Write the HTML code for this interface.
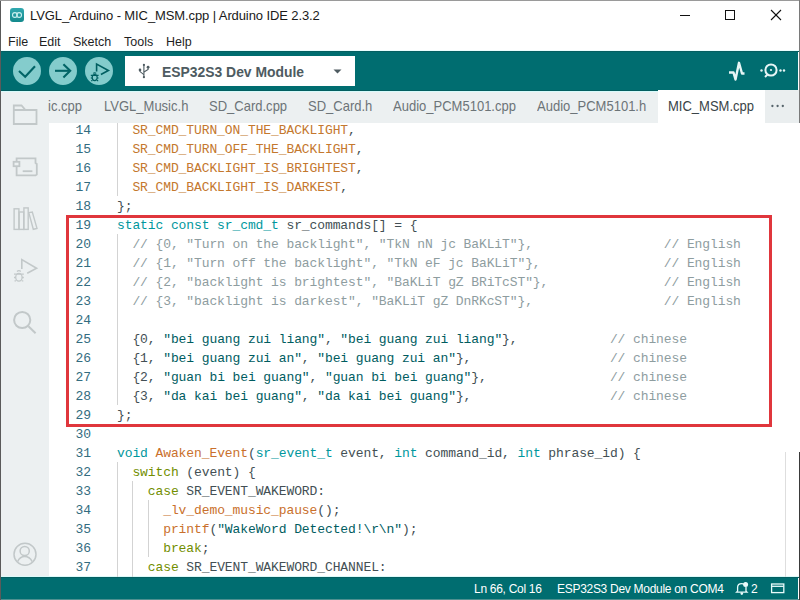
<!DOCTYPE html>
<html><head><meta charset="utf-8">
<style>
*{margin:0;padding:0;box-sizing:border-box}
html,body{width:800px;height:600px;overflow:hidden;background:#fff;font-family:"Liberation Sans",sans-serif}
.abs{position:absolute}
#frameL{left:0;top:0;width:1px;height:600px;background:#5a5a5a}
#frameT{left:0;top:0;width:800px;height:1px;background:#9a9a9a}
#frameR{left:799px;top:0;width:1px;height:123px;background:#7a7a7a}
#frameR2{left:799px;top:452px;width:1px;height:148px;background:#3a3a3a}
#frameB{left:1px;top:599px;width:798px;height:1px;background:#4f9090}
#title{left:1px;top:1px;width:797px;height:30px;background:#fff}
#menu{left:1px;top:30px;width:797px;height:21px;background:#fff}
#toolbar{left:1px;top:51px;width:797px;height:39px;background:#006d70}
#tabs{left:1px;top:90px;width:797px;height:33px;background:#ecf0f1}
#side{left:1px;top:90px;width:48px;height:487px;background:#ecf0f1}
#editor{left:49px;top:123px;width:751px;height:454px;background:#fff;overflow:hidden}
#status{left:1px;top:577px;width:797px;height:23px;background:#006d70}
.tt{font-size:13px;letter-spacing:-0.1px;color:#1a1a1a;white-space:nowrap}
.mn{font-size:12.5px;color:#1f1f1f;white-space:nowrap}
.tab{font-size:14.3px;color:#6c7478;white-space:nowrap;top:98px;transform:scaleX(0.91);transform-origin:0 0}
.code{font-family:"Liberation Mono",monospace;font-size:13px;letter-spacing:-0.1px;white-space:pre;line-height:19px;color:#434f54}
.ln{font-family:"Liberation Mono",monospace;font-size:13px;letter-spacing:-0.1px;line-height:19px;color:#336c80;text-align:right;width:60px;left:31px}
.k{color:#00979d}.f{color:#c9702c}.c{color:#8e9d9f}.s{color:#005c5f}.g{color:#728e00}.o{color:#c4782e}
.guide{width:1px;background:#d3d3d3}
.st{font-size:12px;color:#fff;white-space:nowrap;top:582px}
</style></head><body>
<div class="abs" id="title"></div>
<div class="abs" id="menu"></div>
<div class="abs" id="toolbar"></div>
<div class="abs" id="tabs"></div>
<div class="abs" id="side"></div>
<div class="abs" id="editor"></div>
<div class="abs" id="status"></div>

<!-- ringing edges -->
<div class="abs" style="left:1px;top:50px;width:798px;height:1px;background:#eafefe"></div>
<div class="abs" style="left:1px;top:51px;width:798px;height:1px;background:#045f61"></div>
<div class="abs" style="left:1px;top:90px;width:798px;height:1px;background:#045f61"></div>
<div class="abs" style="left:1px;top:91px;width:798px;height:1px;background:#d8fbfb"></div>
<div class="abs" style="left:1px;top:576px;width:798px;height:1px;background:#dcfafa"></div>
<div class="abs" style="left:1px;top:577px;width:798px;height:1px;background:#045f61"></div>
<!-- title bar -->
<svg class="abs" style="left:10px;top:8px" width="14" height="14" viewBox="0 0 14 14">
<defs><linearGradient id="ig" x1="0" y1="0" x2="0" y2="1"><stop offset="0" stop-color="#31a9b0"/><stop offset="1" stop-color="#13898c"/></linearGradient></defs><rect x="0" y="0" width="14" height="14" rx="3" fill="url(#ig)"/>
<g fill="none" stroke="#c8f0f0" stroke-width="1.1"><circle cx="4.9" cy="7" r="2.4"/><circle cx="9.1" cy="7" r="2.4"/></g>
</svg>
<div class="abs tt" style="left:30px;top:8px">LVGL_Arduino - MIC_MSM.cpp | Arduino IDE 2.3.2</div>
<svg class="abs" style="left:670px;top:0" width="128" height="30" viewBox="670 0 128 30">
<g stroke="#111" stroke-width="1" fill="none" shape-rendering="crispEdges">
<line x1="680" y1="15.5" x2="690" y2="15.5"/>
<rect x="725.5" y="10.5" width="9" height="9"/>
</g>
<g stroke="#111" stroke-width="1.1" fill="none">
<line x1="771" y1="10" x2="781" y2="20"/><line x1="781" y1="10" x2="771" y2="20"/>
</g>
</svg>

<!-- menu -->
<div class="abs mn" style="left:8px;top:35px">File</div>
<div class="abs mn" style="left:39px;top:35px">Edit</div>
<div class="abs mn" style="left:73px;top:35px">Sketch</div>
<div class="abs mn" style="left:124px;top:35px">Tools</div>
<div class="abs mn" style="left:166px;top:35px">Help</div>

<!-- toolbar -->
<svg class="abs" style="left:0;top:51px" width="120" height="39" viewBox="0 51 120 39">
<circle cx="27" cy="71" r="14" fill="#84cccc"/>
<circle cx="63" cy="71" r="14" fill="#84cccc"/>
<circle cx="99" cy="71" r="14" fill="#84cccc"/>
<g fill="none" stroke="#026466" stroke-width="2.1" stroke-linecap="butt" stroke-linejoin="miter">
<polyline points="19,71 25.2,76.8 35,66.2"/>
<line x1="55" y1="70.8" x2="70" y2="70.8"/>
<polyline points="63.4,64.2 70.2,70.8 63.4,77.4"/>
</g>
<g fill="none" stroke="#005f61" stroke-width="1.6">
<polyline points="96.6,71.5 96.6,64 108.4,70.5 100.9,74.5"/>
</g>
<g fill="none" stroke="#005f61" stroke-width="1.2">
<ellipse cx="94.7" cy="77.6" rx="2.5" ry="3"/>
<path d="M90.8 75.4 H98.6 M90.8 78 H92.2 M97.2 78 H98.6 M91.2 80.6 H92.4 M97 80.6 H98.2 M93.2 73.4 Q94.7 72.2 96.2 73.4"/>
</g>
</svg>
<div class="abs" style="left:125px;top:56px;width:230px;height:30px;background:#fff"></div>
<svg class="abs" style="left:134px;top:60px" width="20" height="22" viewBox="134 60 20 22">
<g stroke="#4e5b61" stroke-width="1.1" fill="none">
<line x1="143.9" y1="64.5" x2="143.9" y2="77.5"/>
<polyline points="140,70 140,71.6 143.9,74.6"/><polyline points="148.1,67.4 148.1,69.4 144,72"/>
</g>
<g fill="#4e5b61"><circle cx="143.9" cy="64.9" r="1.1"/><circle cx="140" cy="69.9" r="1.3"/><circle cx="148.1" cy="67.2" r="1.4"/><circle cx="143.9" cy="77.2" r="1.1"/></g>
</svg>
<div class="abs" style="left:162px;top:64px;font-size:13.9px;font-weight:bold;color:#4e5b61;white-space:nowrap">ESP32S3 Dev Module</div>
<svg class="abs" style="left:333px;top:69px" width="10" height="6" viewBox="0 0 10 6"><path d="M0.5 0.5 H8.5 L4.5 4.5Z" fill="#4e5b61"/></svg>
<svg class="abs" style="left:720px;top:55px" width="75" height="30" viewBox="720 55 75 30">
<polyline points="729,72.5 733.5,72.5 735.5,79.5 739,62.8 742,73.5 744.5,73.5" fill="none" stroke="#e6f5f5" stroke-width="2.4" stroke-linejoin="round"/>
<circle cx="771" cy="70" r="5.6" fill="none" stroke="#e6f5f5" stroke-width="2"/>
<circle cx="771" cy="70" r="1.1" fill="#e6f5f5"/>
<line x1="765" y1="77" x2="767.5" y2="74.5" stroke="#e6f5f5" stroke-width="2"/>
<circle cx="761.5" cy="70.5" r="1.2" fill="#e6f5f5"/><circle cx="780.5" cy="70.5" r="1.2" fill="#e6f5f5"/><circle cx="784" cy="70.5" r="1.2" fill="#e6f5f5"/>
</svg>

<!-- tabs -->
<div class="abs tab" style="left:48px">ic.cpp</div>
<div class="abs tab" style="left:104px">LVGL_Music.h</div>
<div class="abs tab" style="left:209px">SD_Card.cpp</div>
<div class="abs tab" style="left:308px">SD_Card.h</div>
<div class="abs tab" style="left:393px">Audio_PCM5101.cpp</div>
<div class="abs tab" style="left:537px">Audio_PCM5101.h</div>
<div class="abs" style="left:658px;top:90px;width:107px;height:33px;background:#fff"></div>
<div class="abs tab" style="left:668px;color:#3a4448">MIC_MSM.cpp</div>
<div class="abs" style="left:765px;top:90px;width:34px;height:33px;background:#eaeeef"></div>
<svg class="abs" style="left:766px;top:100px" width="24" height="12" viewBox="766 100 24 12"><g fill="#55636a"><circle cx="772.4" cy="106" r="1.15"/><circle cx="777.6" cy="106" r="1.15"/><circle cx="782.8" cy="106" r="1.15"/></g></svg>

<!-- sidebar icons -->
<svg class="abs" style="left:0;top:90px" width="49" height="487" viewBox="0 90 49 487">
<g fill="none" stroke="#c2c8c9" stroke-width="1.8" stroke-linejoin="miter">
<path d="M13.8 124 V105.5 H21.5 L25.5 110 H36.5 V124 Z M13.8 110 H36.5"/>
<path d="M16.6 161.5 V158.3 H35.5 V163 L36.8 164 V174.5 L35.5 175.4 H16.6 V166.5"/>
<rect x="13.6" y="161.8" width="5.8" height="4.4"/>
<line x1="22.7" y1="171.2" x2="32.4" y2="171.2"/>
</g>
<g fill="none" stroke="#c2c8c9" stroke-width="1.4">
<rect x="14.1" y="208.8" width="4.8" height="20.6"/>
<rect x="19.1" y="212" width="4.6" height="17.4"/>
<rect x="23.9" y="207.9" width="4.3" height="21.5"/>
<path d="M28.8 212.6 L32.3 212 L37 228.4 L33.3 229.3 Z"/>
</g>
<g fill="none" stroke="#c2c8c9" stroke-width="1.6">
<polyline points="21.8,269 21.8,259.6 36.6,268.2 27.2,273.2"/>
</g>
<g fill="none" stroke="#c2c8c9" stroke-width="1.3">
<ellipse cx="18.9" cy="277.3" rx="3.2" ry="3.9"/>
<path d="M14 274.2 H23.8 M14 277.5 H15.7 M22 277.5 H23.8 M14.5 280.8 H16 M21.8 280.8 H23.3 M17 271.5 Q18.9 269.8 20.8 271.5"/>
</g>
<g fill="none" stroke="#c2c8c9" stroke-width="2">
<circle cx="22.2" cy="320" r="8.1"/><line x1="28.4" y1="326.3" x2="35.6" y2="333.2"/>
</g>
<g fill="none" stroke="#c2c8c9" stroke-width="1.5">
<circle cx="25" cy="554.2" r="11"/><circle cx="24.7" cy="551" r="4.6"/>
<path d="M17.6 561.6 Q20 556.6 24.7 556.6 Q29.6 556.6 32.2 561.6"/>
</g>
</svg>

<!-- editor -->
<!-- guides -->
<div class="abs guide" style="left:117px;top:123px;height:73px"></div>
<div class="abs guide" style="left:117px;top:234px;height:171px"></div>
<div class="abs guide" style="left:117px;top:462px;height:115px"></div>
<div class="abs guide" style="left:132px;top:481px;height:96px"></div>
<div class="abs guide" style="left:148px;top:500px;height:57px"></div>

<div class="abs" style="left:66px;top:215px;width:706px;height:212px;border:3px solid #e0363c"></div>

<!-- CODE -->
<div class="abs" style="left:31px;top:121px;width:60px"><div class="ln">14</div><div class="ln">15</div><div class="ln">16</div><div class="ln">17</div><div class="ln">18</div><div class="ln">19</div><div class="ln">20</div><div class="ln">21</div><div class="ln">22</div><div class="ln">23</div><div class="ln">24</div><div class="ln">25</div><div class="ln">26</div><div class="ln">27</div><div class="ln">28</div><div class="ln">29</div><div class="ln">30</div><div class="ln">31</div><div class="ln">32</div><div class="ln">33</div><div class="ln">34</div><div class="ln">35</div><div class="ln">36</div><div class="ln">37</div></div><div class="abs code" style="left:117px;top:121px"><div>  <span class="o">SR_CMD_TURN_ON_THE_BACKLIGHT</span>,</div><div>  <span class="o">SR_CMD_TURN_OFF_THE_BACKLIGHT</span>,</div><div>  <span class="o">SR_CMD_BACKLIGHT_IS_BRIGHTEST</span>,</div><div>  <span class="o">SR_CMD_BACKLIGHT_IS_DARKEST</span>,</div><div>};</div><div><span class="k">static const sr_cmd_t</span> sr_commands[] = {</div><div>  <span class="c">// {0, "Turn on the backlight", "TkN nN jc BaKLiT"},                 // English</span></div><div>  <span class="c">// {1, "Turn off the backlight", "TkN eF jc BaKLiT"},                // English</span></div><div>  <span class="c">// {2, "backlight is brightest", "BaKLiT gZ BRiTcST"},               // English</span></div><div>  <span class="c">// {3, "backlight is darkest", "BaKLiT gZ DnRKcST"},                 // English</span></div><div> </div><div>  {0, <span class="s">"bei guang zui liang"</span>, <span class="s">"bei guang zui liang"</span>},<span class="c">            // chinese</span></div><div>  {1, <span class="s">"bei guang zui an"</span>, <span class="s">"bei guang zui an"</span>},<span class="c">                  // chinese</span></div><div>  {2, <span class="s">"guan bi bei guang"</span>, <span class="s">"guan bi bei guang"</span>},<span class="c">                // chinese</span></div><div>  {3, <span class="s">"da kai bei guang"</span>, <span class="s">"da kai bei guang"</span>},<span class="c">                  // chinese</span></div><div>};</div><div> </div><div><span class="k">void</span> <span class="f">Awaken_Event</span>(<span class="k">sr_event_t</span> event, <span class="k">int</span> command_id, <span class="k">int</span> phrase_id) {</div><div>  <span class="g">switch</span> (event) {</div><div>    <span class="g">case</span> SR_EVENT_WAKEWORD:</div><div>      <span class="f">_lv_demo_music_pause</span>();</div><div>      <span class="f">printf</span>(<span class="s">"WakeWord Detected!\r\n"</span>);</div><div>      <span class="g">break</span>;</div><div>    <span class="g">case</span> SR_EVENT_WAKEWORD_CHANNEL:</div></div>
<!-- /CODE -->
<!-- status bar -->
<div class="abs st" style="left:474px;letter-spacing:-0.29px">Ln 66, Col 16</div>
<div class="abs st" style="left:557px;letter-spacing:-0.29px">ESP32S3 Dev Module on COM4</div>
<div class="abs st" style="left:751px">2</div>
<svg class="abs" style="left:733px;top:579px" width="55" height="18" viewBox="733 579 55 18">
<g fill="none" stroke="#e8fafa" stroke-width="1.3">
<path d="M737.6 591.2 V587.2 Q737.6 583.6 741.8 583.6 Q743 583.6 744 584.2 M746 586.8 V591.2 L747 592.2 H736.6 L737.6 591.2"/>
<rect x="771.6" y="584" width="12.2" height="8.6"/><line x1="771.6" y1="586.3" x2="783.8" y2="586.3"/>
</g>
<circle cx="741.8" cy="593.6" r="1.3" fill="#e8fafa"/>
<circle cx="745.6" cy="584.4" r="2.5" fill="#e8fafa"/>
</svg>

<div class="abs" id="frameL"></div>
<div class="abs" id="frameT"></div>
<div class="abs" id="frameR"></div>
<div class="abs" id="frameR2"></div>
<div class="abs" id="frameB"></div>
<div class="abs" style="left:785px;top:452px;width:1px;height:125px;background:#dedede"></div>
</body></html>
